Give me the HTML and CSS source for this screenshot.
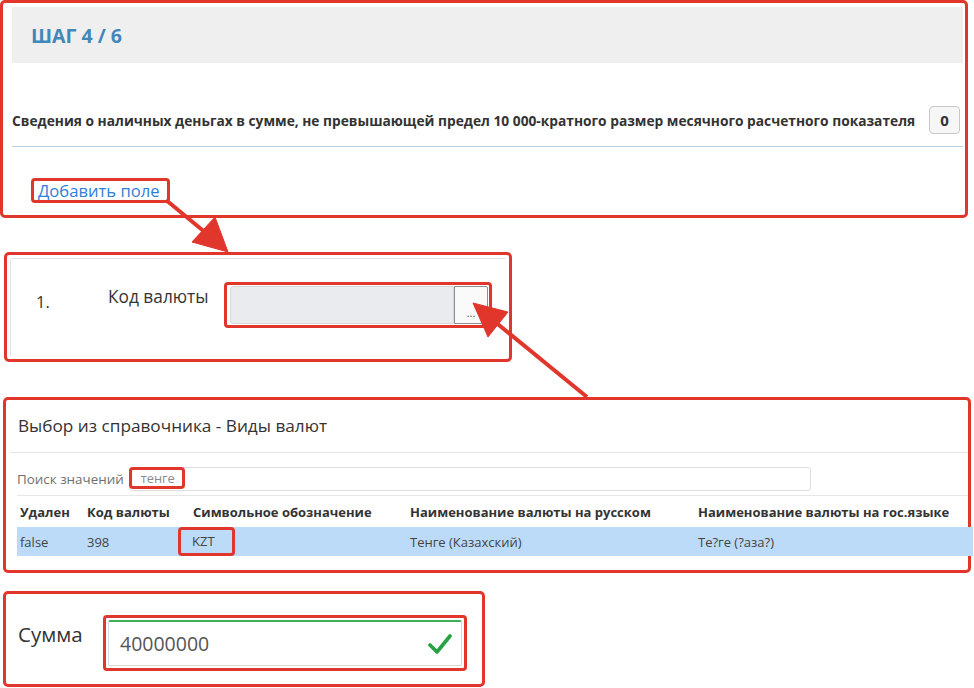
FILE: index.html
```html
<!DOCTYPE html>
<html lang="ru">
	<head>
		<meta charset="utf-8">
		<title>Шаг 4 / 6</title>
		<link rel="stylesheet" href="styles.css">
	</head>
	<body>
		<main class="page">
			<section class="hl step">
				<div class="step-head">ШАГ 4 / 6</div>
				<div class="question">
					<span>Сведения о наличных деньгах в сумме, не превышающей предел 10 000-кратного размер месячного расчетного показателя</span>
					<button class="count">0</button>
				</div>
				<div class="add-row"><a class="hl-sm add">Добавить поле</a></div>
			</section>

			<section class="hl field">
				<div class="field-card">
					<span class="num">1.</span>
					<span class="label">Код валюты</span>
					<div class="hl-sm pick">
						<div class="pick-input"></div>
						<button class="pick-btn">...</button>
					</div>
				</div>
			</section>

			<section class="hl lookup">
				<div class="lookup-title">Выбор из справочника - Виды валют</div>
				<div class="search">
					<span class="search-label">Поиск значений</span>
					<div class="search-input"><span class="hl-sm search-val">тенге</span></div>
				</div>
				<table class="grid">
					<thead>
						<tr><th class="c1">Удален</th><th class="c2">Код валюты</th><th class="c3">Символьное обозначение</th><th class="c4">Наименование валюты на русском</th><th>Наименование валюты на гос.языке</th></tr>
					</thead>
					<tbody>
						<tr class="sel"><td>false</td><td>398</td><td><span class="hl-sm code">KZT</span></td><td>Тенге (Казахский)</td><td>Те?ге (?аза?)</td></tr>
					</tbody>
				</table>
			</section>

			<section class="hl sum">
				<span class="sum-label">Сумма</span>
				<div class="hl-sm sum-box">
					<div class="sum-input">
						<span>40000000</span>
						<svg class="ok" width="24" height="22" viewBox="0 0 24 22"><path d="M2 12 L9 19 L22 3" fill="none" stroke="#27a243" stroke-width="3.6" stroke-linecap="round" stroke-linejoin="round"/></svg>
					</div>
				</div>
			</section>

			<svg class="arrows" width="974" height="688" viewBox="0 0 974 688">
				<g fill="#e0362c" stroke="#e0362c" stroke-width="4">
					<line x1="166" y1="200" x2="212" y2="238"/>
					<polygon points="228,252 215,217 192,242" stroke-width="1"/>
					<line x1="587" y1="397" x2="494" y2="321"/>
					<polygon points="473,303 508,312 488,337" stroke-width="1"/>
				</g>
			</svg>
		</main>
	</body>
</html>
```

FILE: styles.css
```css
:root{
	--red:#e0362c;
	--blue:#3f88b8;
	--link:#2f80d6;
	--ink:#333;
}
body{
	background-color:#fff;
	color:var(--ink);
	font-family:'Open Sans',sans-serif;
	margin:0;
}
button{
	font-family:inherit;
}
.page{
	display:flex;
	flex-direction:column;
	height:688px;
	overflow:hidden;
	position:relative;
	width:974px;
}
.hl{
	border:3px solid var(--red);
	border-radius:5px;
	box-sizing:border-box;
}
.hl-sm{
	border:3px solid var(--red);
	border-radius:4px;
	box-sizing:border-box;
}

/* step */
.step{
	height:218px;
	padding:4px 2px 0 9px;
	width:968px;
}
.step-head{
	align-items:center;
	background-color:#efefef;
	color:var(--blue);
	display:flex;
	font-size:19.5px;
	font-weight:700;
	height:56px;
	padding-left:19px;
}
.question{
	align-items:center;
	border-bottom:1px solid #b9d2e4;
	display:flex;
	font-size:13.75px;
	font-weight:700;
	justify-content:space-between;
	margin-top:43px;
	padding:0 3px 12px 0;
	white-space:nowrap;
}
.count{
	background-color:#f6f6f6;
	border:1px solid #c8c8c8;
	border-radius:4px;
	color:#333;
	font-size:15px;
	font-weight:700;
	height:28px;
	padding:0;
	width:31px;
}
.add-row{
	display:flex;
	margin-top:31px;
	padding-left:19px;
}
.add{
	color:var(--link);
	font-size:16.6px;
	height:25px;
	line-height:19px;
	padding:0 7px 0 4px;
}

/* field */
.field{
	height:110px;
	margin:34px 0 0 4px;
	padding:3px;
	width:508px;
}
.field-card{
	align-items:flex-start;
	border:1px solid #e2e2e2;
	border-radius:4px 0 0 0;
	border-right:none;
	border-bottom:none;
	box-sizing:border-box;
	display:flex;
	height:100%;
	padding-top:23px;
}
.num{
	font-size:16.5px;
	margin:8px 0 0 25px;
	width:72px;
}
.label{
	font-size:17.3px;
	margin-top:3px;
	width:116px;
}
.pick{
	display:flex;
	height:46px;
	padding:1px 1px 1px 3px;
	width:268px;
}
.pick-input{
	background-color:#e9ebee;
	border:1px solid #d4d7db;
	border-radius:3px 0 0 3px;
	flex:1;
}
.pick-btn{
	background-color:#fafafa;
	border:1px solid #8e8e8e;
	border-radius:0 2px 2px 0;
	color:#555;
	font-size:11px;
	line-height:1;
	padding:14px 0 0;
	width:34px;
}

/* lookup */
.lookup{
	height:176px;
	margin:35px 0 0 3px;
	padding:0 0 0 4px;
	width:968px;
}
.lookup-title{
	border-bottom:1px solid #e6e6e6;
	font-size:17.2px;
	height:52px;
	line-height:52px;
	padding-left:8px;
}
.search{
	align-items:center;
	border-bottom:1px solid #e6e6e6;
	box-sizing:border-box;
	display:flex;
	height:43px;
	margin-left:7px;
	padding-top:9px;
}
.search-label{
	color:#6f6f6f;
	font-size:13.4px;
	margin-right:5px;
}
.search-input{
	border:1px solid #dedede;
	border-radius:3px;
	display:flex;
	height:22px;
	width:680px;
}
.search-val{
	color:#8a8a8a;
	font-size:12.8px;
	height:22px;
	line-height:16px;
	margin:-1px 0 0 -1px;
	padding-left:9px;
	width:56px;
}
.grid{
	border-collapse:collapse;
	font-size:13px;
	margin:0 0 0 7px;
	width:956px;
}
.grid th,.grid td{
	padding:0 0 0 3px;
	text-align:left;
	white-space:nowrap;
}
.grid th{
	font-weight:700;
	height:31px;
}
.grid td{
	color:#444;
	height:29px;
}
.c1{width:64px;}
.c2{width:103px;}
.c3{width:214px;}
.c4{width:285px;}
.sel{
	background-color:#bcdbf8;
}
.sel td:nth-child(3){
	padding-left:0;
}
.code{
	display:block;
	height:29px;
	line-height:23px;
	margin-left:-12px;
	padding-left:11px;
	width:57px;
}

/* sum */
.sum{
	align-items:flex-start;
	display:flex;
	height:96px;
	margin:18px 0 0 3px;
	padding:21px 0 0 12px;
	width:482px;
}
.sum-label{
	font-size:20.5px;
	margin-top:5px;
	width:85px;
}
.sum-box{
	height:56px;
	padding:2px;
	width:364px;
}
.sum-input{
	align-items:center;
	border:1px solid #d8d8d8;
	border-top:2px solid #3fae55;
	border-radius:2px;
	box-sizing:border-box;
	color:#555;
	display:flex;
	font-size:19.5px;
	height:100%;
	justify-content:space-between;
	padding:0 9px 0 11px;
}

.arrows{
	left:0;
	pointer-events:none;
	position:absolute;
	top:0;
}
```
